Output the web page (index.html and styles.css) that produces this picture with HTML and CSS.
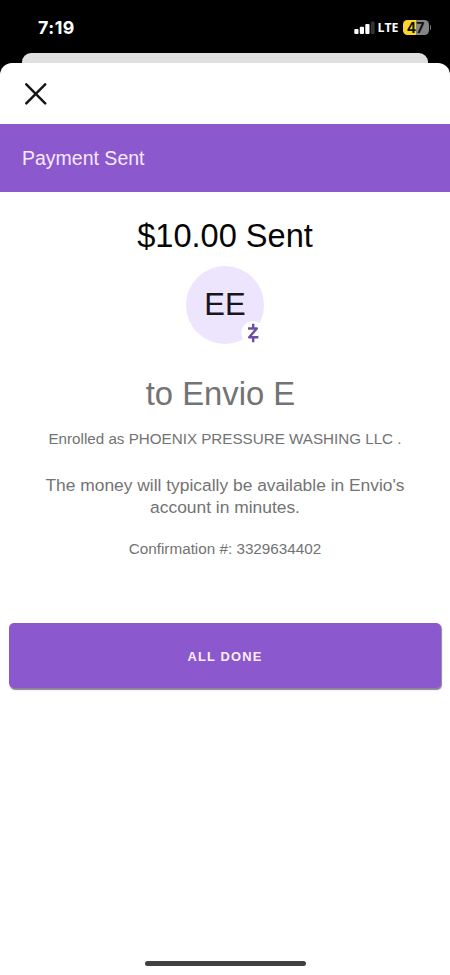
FILE: index.html
```
<!DOCTYPE html>
<html lang="en">
<head>
<meta charset="utf-8">
<title>Payment Sent</title>
<link rel="stylesheet" href="styles.css">
</head>
<body>
<header class="status">
  <span class="time">7:19</span>
  <div class="indicators">
    <svg class="signal" width="21" height="13" viewBox="0 0 21 13"><g fill="#fff"><rect x="0.3" y="8" width="4.2" height="5" rx="1"/><rect x="5.8" y="5.7" width="4.2" height="7.3" rx="1"/><rect x="11.3" y="3" width="4.2" height="10" rx="1"/></g><rect x="16.8" y="0.5" width="3.8" height="12.5" rx="1" fill="#333"/></svg>
    <span class="lte">LTE</span>
    <span class="battery">47</span>
    <span class="battery-tip"></span>
  </div>
</header>
<div class="behind"></div>
<main class="sheet">
  <div class="close-row">
    <svg width="22" height="22" viewBox="0 0 22 22"><path d="M1.3 1.3 20.2 20.4M20.2 1.3 1.3 20.4" stroke="#161616" stroke-width="2.5" stroke-linecap="round"/></svg>
  </div>
  <div class="banner"><span>Payment Sent</span></div>
  <h1 class="amount"><span>$10.00 Sent</span></h1>
  <div class="avatar"><span>EE</span>
    <svg class="badge" width="24" height="24" viewBox="0 0 24 24"><circle cx="12" cy="12" r="11.7" fill="#fff"/><path d="M7 7.5H15.8L8.2 16.3H17.4M12.2 2.8V7.5M12.2 16.3V21.2" fill="none" stroke="#6b4fa5" stroke-width="2.4" stroke-linejoin="round"/></svg>
  </div>
  <h2 class="recipient"><span>to Envio E</span></h2>
  <p class="enrolled"><span>Enrolled as PHOENIX PRESSURE WASHING LLC .</span></p>
  <p class="note"><span>The money will typically be available in Envio's<br>account in minutes.</span></p>
  <p class="confirm"><span>Confirmation #: 3329634402</span></p>
  <button class="done">ALL DONE</button>
  <div class="home"></div>
</main>
</body>
</html>
```
FILE: styles.css
```
* { box-sizing: border-box; }
body { margin: 0; width: 450px; height: 975px; overflow: hidden; background: #000; font-family: "Liberation Sans", Arial, sans-serif; display: flex; flex-direction: column; }
.status { height: 53px; flex: none; display: flex; justify-content: space-between; align-items: flex-start; padding: 0 19px 0 38px; color: #fff; font-family: Inter, sans-serif; }
.time { font-size: 17.8px; font-weight: 700; line-height: 20px; margin-top: 18px; letter-spacing: 0.5px; }
.indicators { display: flex; align-items: center; height: 16px; margin-top: 19px; }
.signal { margin-top: 0; }
.lte { font-size: 12.3px; font-weight: 700; margin: 1px 4px 0 3px; font-family: "Open Sans", sans-serif; line-height: 16px; }
.battery { width: 26px; height: 15px; border-radius: 4.5px; background: linear-gradient(90deg, #f9d62c 0 50%, #858585 50%); color: #111; font-size: 14px; font-weight: 700; line-height: 15px; text-align: center; }
.battery-tip { width: 1.5px; height: 5px; margin-left: 1px; border-radius: 0 2px 2px 0; background: #777; }
.behind { height: 10px; flex: none; margin: 0 22px; border-radius: 9px 9px 0 0; background: #e0e0e0; }
.sheet { flex: 1; background: #fff; border-radius: 12px 12px 0 0; display: flex; flex-direction: column; align-items: center; color: #737373; }
.close-row { width: 100%; height: 61px; padding: 20px 0 0 25px; flex: none; }
.close-row svg { display: block; }
.banner { width: 100%; height: 68px; padding-left: 22px; line-height: 68px; background: #8b58cd; color: #f7e9ff; font-size: 19.5px; flex: none; }
h1, h2, p { margin: 0; font-weight: 400; text-align: center; flex: none; }
.amount { margin-top: 24px; font-size: 32.6px; line-height: 40px; color: #050505; }
.avatar { position: relative; width: 78px; height: 78px; margin-top: 10px; border-radius: 50%; background: #ede4fd; color: #18151e; font-size: 31px; line-height: 78px; text-align: center; flex: none; }
.badge { position: absolute; left: 55px; top: 55px; }
.recipient { margin-top: 30px; padding-right: 9px; font-size: 32.8px; line-height: 40px; }
.enrolled { margin-top: 15px; font-size: 15.2px; line-height: 20px; }
.note { margin-top: 25px; font-size: 17.4px; line-height: 22px; }
.confirm { margin-top: 21px; font-size: 15.25px; line-height: 20px; }
.done { width: 432px; height: 65px; margin-top: 64px; padding: 1px 0 0; border: 0; border-radius: 5px; background: #8b58cd; box-shadow: 1px 1.5px 1px #8d8298; color: #fcedff; font: 700 12.9px "Liberation Sans", Arial, sans-serif; letter-spacing: 1.2px; flex: none; }
.home { width: 161px; height: 5px; margin: auto 0 9px; border-radius: 3px; background: #414141; flex: none; }
```
